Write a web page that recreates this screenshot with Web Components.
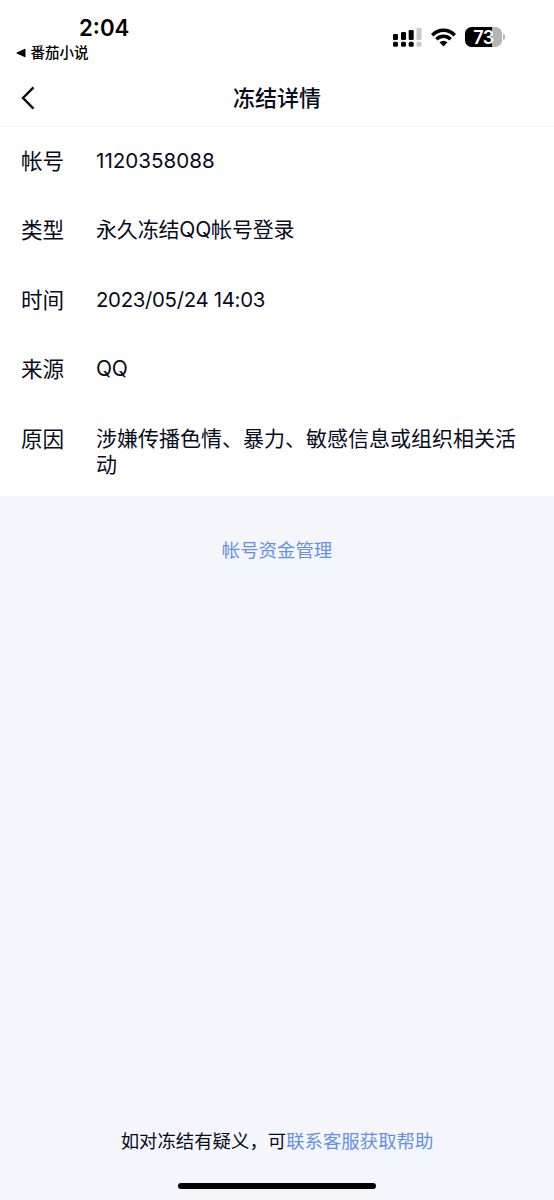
<!DOCTYPE html>
<html lang="zh-CN">
<head>
<meta charset="utf-8">
<title>冻结详情</title>
<style>
html,body{margin:0;height:100%;background:#f4f6fb}
body{font-family:Inter,"Noto Sans CJK SC",sans-serif;color:#080b1c}
</style>
</head>
<body>
<freeze-page>
  <status-bar slot="top" time="2:04" back="番茄小说" battery="73"></status-bar>
  <nav-bar slot="top">冻结详情</nav-bar>
  <detail-row label="帐号" style="--size:20.6px">1120358088</detail-row>
  <detail-row label="类型" style="--track:-.17px">永久冻结QQ帐号登录</detail-row>
  <detail-row label="时间" style="--size:20.4px;--track:-.32px">2023/05/24 14:03</detail-row>
  <detail-row label="来源" style="--track:-.3px">QQ</detail-row>
  <detail-row label="原因">涉嫌传播色情、暴力、敏感信息或组织相关活动</detail-row>
  <text-link slot="action">帐号资金管理</text-link>
  <span slot="help">如对冻结有疑义，可<text-link>联系客服获取帮助</text-link></span>
</freeze-page>
<script>
class Base extends HTMLElement {
  constructor() {
    super();
    this.attachShadow({ mode: 'open' }).innerHTML = this.view();
  }
}
customElements.define('freeze-page', class extends Base {
  view() { return `<style>
    :host{display:flex;flex-direction:column;height:1200px;background:#f4f6fb}
    .top{background:#fff}
    .rows{background:#fff;display:flex;flex-direction:column;gap:43.5px;padding:20.5px 21px 18.5px}
    .action{display:flex;justify-content:center;margin-top:40.5px;font-size:18.4px;line-height:26px}
    .help{margin-top:auto;text-align:center;font-size:18.4px;line-height:26px;white-space:nowrap}
    .home{width:198px;height:6px;border-radius:3px;background:#000;margin:29px auto 11px}
  </style>
  <div class="top"><slot name="top"></slot></div>
  <div class="rows"><slot></slot></div>
  <div class="action"><slot name="action"></slot></div>
  <div class="help"><slot name="help"></slot></div>
  <div class="home"></div>`; }
});
customElements.define('status-bar', class extends Base {
  view() { return `<style>
    :host{display:flex;justify-content:space-between;height:69px;color:#000}
    .left{padding:15px 0 0 16px}
    .time{font-size:22.2px;line-height:26px;font-weight:600;margin-left:63px}
    .back{display:flex;align-items:center;gap:4.5px;font-size:14.5px;line-height:22px;font-weight:500;margin-top:1px}
    .right{display:flex;align-items:center;height:22px;margin:26px 49px 0 0}
    svg{display:block}
    .wifi{margin:0 9px 0 9px}
    .bat{width:37px;height:20px;border-radius:6.5px;background:linear-gradient(90deg,#000 73%,#b5b5b5 73%);color:#fff;font-size:18px;font-weight:600;line-height:21px;text-align:center;letter-spacing:-.5px}
    .tip{width:2px;height:6px;border-radius:0 2px 2px 0;background:#b5b5b5;margin-left:1px}
  </style>
  <div class="left"><div class="time">${this.getAttribute('time')}</div>
  <div class="back"><svg width="10" height="10" viewBox="0 0 10 10"><path d="M.8 4.4 8.4.9Q9.5.5 9.5 1.5v7Q9.5 9.5 8.4 9.1L.8 5.6Q0 5 .8 4.4Z"/></svg><span>${this.getAttribute('back')}</span></div></div>
  <div class="right">
    <svg width="29" height="20" viewBox="0 0 29 20"><g><rect x="0" y="7" width="5" height="6" rx="1.2"/><rect x="8" y="5" width="5" height="8" rx="1.2"/><rect x="15.7" y="3" width="5" height="10" rx="1.2"/><rect x="0" y="14.8" width="5" height="5" rx="1.5"/><rect x="8" y="14.8" width="5" height="5" rx="1.5"/><rect x="15.7" y="14.8" width="5" height="5" rx="1.5"/></g><g fill="#c8c8c8"><rect x="23.5" y="1" width="5" height="12" rx="1.2"/><rect x="23.5" y="14.8" width="5" height="5" rx="1.5"/></g></svg>
    <svg class="wifi" width="25" height="19" viewBox="0 0 25 19"><g fill="none" stroke="#000" stroke-width="3.4"><path d="M1.2 7.2Q6.2 2.2 12.5 2.2T23.8 7.2"/><path d="M5.3 11.3Q8.4 8.3 12.5 8.3T19.7 11.3"/></g><path d="M8.5 14.3Q12.5 11.2 16.5 14.3L12.5 18.4Z"/></svg>
    <div class="bat">${this.getAttribute('battery')}</div><div class="tip"></div>
  </div>`; }
});
customElements.define('nav-bar', class extends Base {
  view() { return `<style>
    :host{display:grid;grid-template-columns:60px 1fr 60px;align-items:center;height:57px;border-bottom:1px solid #f5f5f6}
    svg{display:block;margin-left:21px}
    h1{margin:0;text-align:center;font-size:22px;line-height:30px;font-weight:500}
  </style>
  <svg width="14" height="24" viewBox="0 0 14 24"><path d="M12.5 1.3 2 12 12.5 22.7" fill="none" stroke="#080b1c" stroke-width="2.4"/></svg>
  <h1><slot></slot></h1>`; }
});
customElements.define('detail-row', class extends Base {
  view() { return `<style>
    :host{display:flex}
    .label{flex:0 0 75px;font-size:21.6px;line-height:27px;height:26px}
    .value{font-size:var(--size,21px);line-height:26px;width:424px;letter-spacing:var(--track,0)}
  </style>
  <div class="label">${this.getAttribute('label')}</div><div class="value"><slot></slot></div>`; }
});
customElements.define('text-link', class extends Base {
  view() { return `<style>:host{display:inline;color:#6690e6;cursor:pointer}</style><slot></slot>`; }
});
</script>
</body>
</html>
